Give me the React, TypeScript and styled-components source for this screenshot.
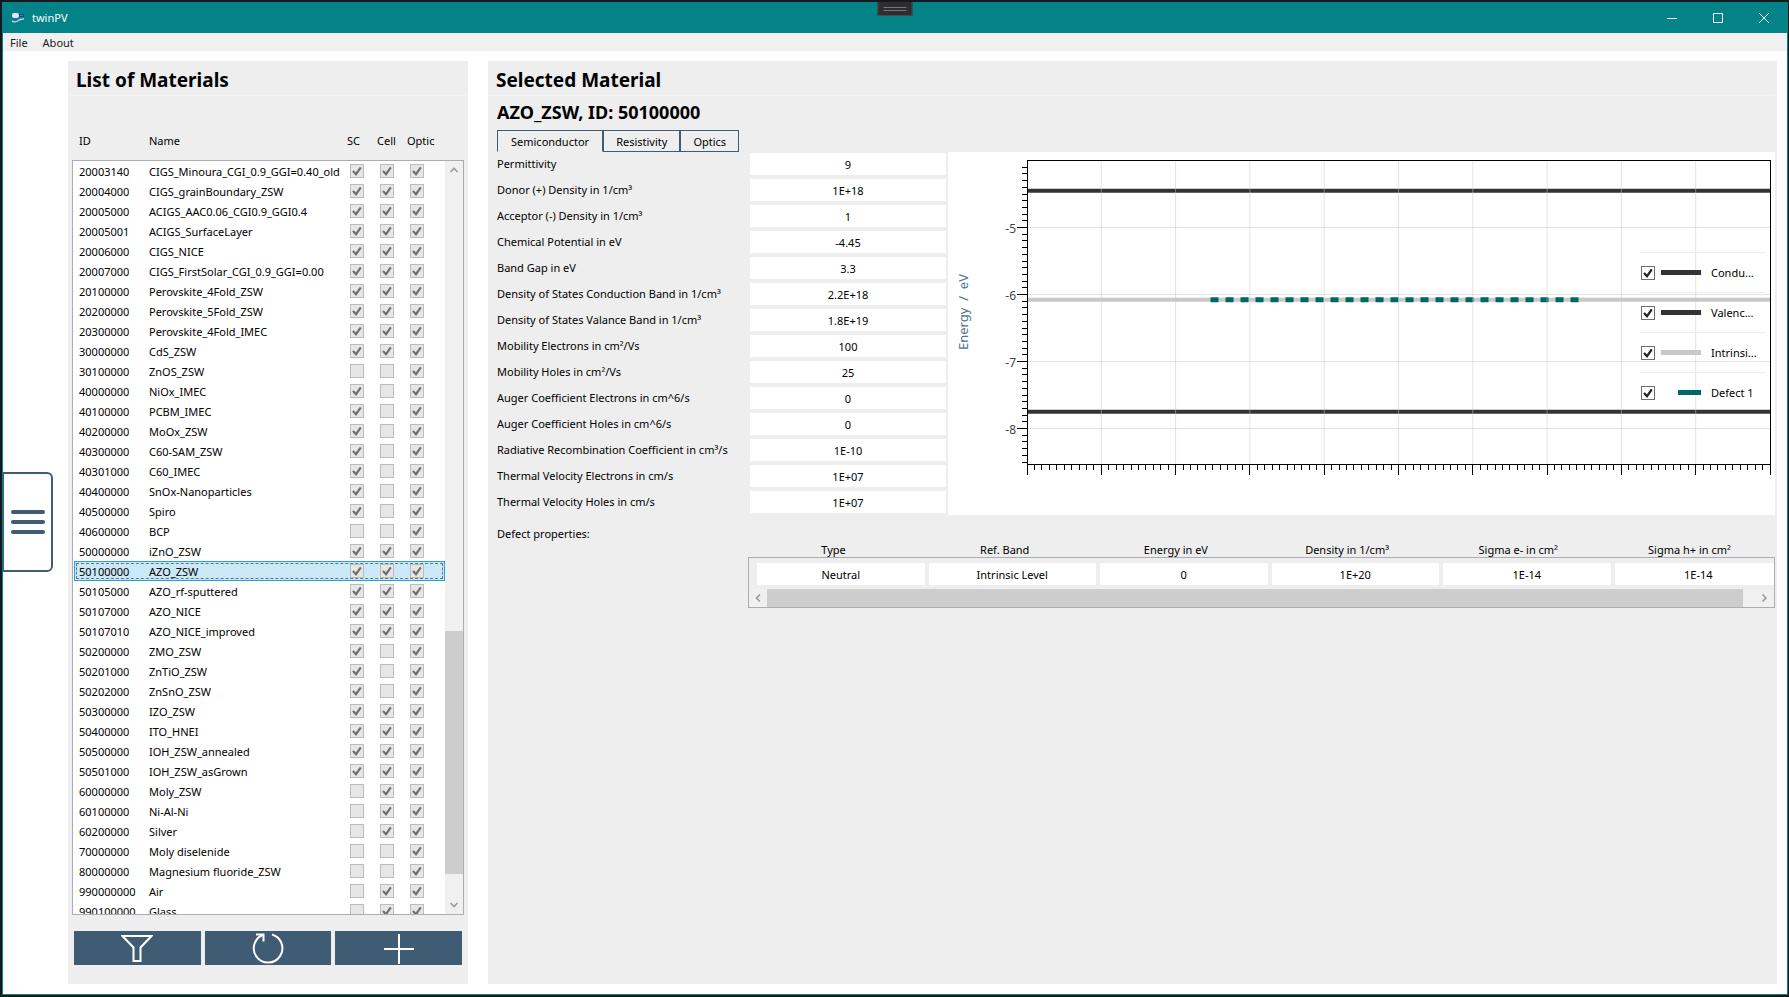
import React from "react";
import styled, { createGlobalStyle, css } from "styled-components";

const slate = "#3f5c74";
const panel = "#eeeeee";
const frame = "#abadb3";

const Global = createGlobalStyle`
  * { box-sizing: border-box; }
  body { margin: 0; background: #0d1214; }
  body, button, input {
    font-family: "Noto Sans", "Open Sans", sans-serif;
    font-size: 11px;
    line-height: 16px;
    color: #000;
  }
`;

const Desktop = styled.div`
  height: 100vh;
  min-width: 1200px;
  min-height: 640px;
  padding: 2px 1px 2px 2px;
  background: #14191c;
`;

const Window = styled.div`
  height: 100%;
  border: 1px solid #038387;
  background: #fff;
  display: flex;
  flex-direction: column;
`;

const TitleBar = styled.header`
  position: relative;
  height: 30px;
  flex: none;
  display: flex;
  align-items: center;
  padding-left: 8px;
  gap: 6px;
  background: #038387;
  color: #fff;
`;

const WindowButtons = styled.div`
  margin-left: auto;
  align-self: stretch;
  display: flex;
`;

const WindowButton = styled.button`
  width: 46px;
  padding: 0;
  border: 0;
  background: none;
  display: flex;
  align-items: center;
  justify-content: center;
`;

const DebugHandle = styled.div`
  position: absolute;
  top: -1px;
  left: 50%;
  transform: translateX(-50%);
  width: 35px;
  height: 14px;
  background: #2d2d30;
  border: 1px solid #4a4a4c;
  border-top: 0;
  display: flex;
  flex-direction: column;
  align-items: center;
  justify-content: center;
  gap: 2px;
`;

const HandleLine = styled.i`
  width: 23px;
  height: 1px;
  background: #77777a;
`;

const MenuBar = styled.nav`
  height: 18px;
  flex: none;
  display: flex;
  align-items: center;
  gap: 13px;
  padding: 1px 0 0 6px;
  background: #f0f0f0;
`;

const MenuItem = styled.button`
  border: 0;
  padding: 0 1px;
  background: none;
  color: #212121;
`;

const Body = styled.div`
  flex: 1;
  min-height: 0;
  display: grid;
  grid-template-columns: 65px 400px 1fr;
`;

const Drawer = styled.aside`
  display: flex;
  align-items: center;
  padding-bottom: 2px;
`;

const DrawerButton = styled.button`
  width: 50px;
  height: 100px;
  padding: 0;
  border: 2px solid ${slate};
  border-left-width: 1px;
  border-radius: 0 6px 6px 0;
  background: #fff;
  display: flex;
  flex-direction: column;
  align-items: center;
  justify-content: center;
  gap: 6px;
`;

const DrawerLine = styled.i`
  width: 34px;
  height: 4px;
  border-radius: 2px;
  background: ${slate};
`;

const Panel = styled.section`
  min-width: 0;
  min-height: 0;
  margin: 10px 0;
  background: ${panel};
  display: flex;
  flex-direction: column;
`;

const MainPanel = styled(Panel)`
  margin: 10px 10px 10px 20px;
  padding-right: 2px;
`;

const PanelTitle = styled.h1`
  flex: none;
  height: 35px;
  margin: 0;
  padding-left: 8px;
  border-bottom: 1px solid #f3f3f3;
  font-size: 19px;
  line-height: 38px;
`;

const MaterialName = styled.h2`
  flex: none;
  height: 34px;
  margin: 0;
  padding-left: 9px;
  font-size: 18px;
  line-height: 32px;
`;

/* Material list */

const ListArea = styled.div`
  position: relative;
  flex: 1;
  min-height: 0;
  margin: 0 4px;
  display: flex;
`;

const ListTable = styled.table`
  flex: 1;
  display: flex;
  flex-direction: column;
`;

const ListHead = styled.thead`
  display: block;
  height: 64px;
  padding: 37px 0 0 7px;
`;

const HeadRow = styled.tr`
  display: grid;
  grid-template-columns: 70px 198px 30px 30px 1fr;
`;

const HeadCell = styled.th`
  padding: 0;
  text-align: left;
  font-weight: 400;
`;

const ListBody = styled.tbody`
  display: block;
  flex: 1;
  min-height: 0;
  overflow: hidden;
  padding: 0 18px 0 1px;
  border: 1px solid ${frame};
  background: #fff;
`;

const ListRow = styled.tr<{ $selected: boolean }>`
  height: 20px;
  display: grid;
  grid-template-columns: 70px 201px 30px 30px 1fr;
  align-items: center;
  padding-left: 4px;
  border: 1px solid transparent;
  ${(p) =>
    p.$selected &&
    css`
      border-color: #26a0da;
      background: #cbe8f6;
      outline: 1px dashed #5f7885;
      outline-offset: -3px;
    `}
`;

const Cell = styled.td`
  display: flex;
  align-items: center;
  padding: 0;
  white-space: nowrap;
`;

const TextCell = styled(Cell)`
  padding-top: 2px;
`;

const tick = (color: string) =>
  `url("data:image/svg+xml,%3Csvg xmlns='http://www.w3.org/2000/svg' width='12' height='12'%3E%3Cpath d='M2 6l3 3.2L9.8 2.4' fill='none' stroke='%23${color}' stroke-width='2.2'/%3E%3C/svg%3E")`;

const CheckBox = styled.input`
  appearance: none;
  flex: none;
  width: 14px;
  height: 14px;
  margin: 0;
  border: 1px solid #707070;
  background: #fff;
  &:checked {
    background-image: ${tick("212121")};
  }
  &:disabled {
    border-color: #bcbcbc;
    background-color: #e6e6e6;
  }
  &:disabled:checked {
    background-image: ${tick("707070")};
  }
`;

const VScroll = styled.div`
  position: absolute;
  top: 65px;
  right: 1px;
  bottom: 1px;
  width: 18px;
  display: grid;
  grid-template-rows: 18px 1fr 18px;
  background: #f0f0f0;
`;

const ScrollArrow = styled.button`
  padding: 0;
  border: 0;
  background: none;
  display: flex;
  align-items: center;
  justify-content: center;
`;

const VTrack = styled.div`
  display: grid;
  grid-template-rows: 63fr 34fr 3fr;
`;

const VThumb = styled.div`
  grid-row: 2;
  background: #cdcdcd;
`;

const Actions = styled.div`
  flex: none;
  display: grid;
  grid-template-columns: repeat(3, 1fr);
  gap: 4px;
  padding: 16px 6px 19px;
`;

const ActionButton = styled.button`
  height: 34px;
  padding: 0;
  border: 0;
  background: #3f5c74;
  display: flex;
  align-items: center;
  justify-content: center;
`;

/* Selected material */

const Tabs = styled.div`
  flex: none;
  display: flex;
  height: 22px;
  padding-left: 9px;
`;

const Tab = styled.button<{ $active?: boolean }>`
  padding: 2px ${(p) => (p.$active ? 13 : 12)}px 0;
  border: 1px solid ${slate};
  border-bottom-color: ${(p) => (p.$active ? panel : slate)};
  background: ${panel};
`;

const Overview = styled.div`
  display: grid;
  grid-template-columns: 449px 1fr;
  gap: 2px;
  padding-left: 9px;
`;

const Properties = styled.form`
  display: flex;
  flex-direction: column;
  gap: 4px;
  padding: 1px 0 2px;
`;

const Property = styled.label`
  display: grid;
  grid-template-columns: 253px 196px;
  align-items: center;
`;

const ValueBox = styled.input`
  width: 100%;
  height: 22px;
  padding: 0;
  border: 0;
  background: #fff;
  text-align: center;
`;

const Chart = styled.figure`
  margin: 0;
  padding: 8px 5px 50px 0;
  background: #fff;
  display: grid;
  grid-template-columns: 79px 1fr;
`;

const AxisTitle = styled.figcaption`
  justify-self: start;
  width: 30px;
  writing-mode: vertical-rl;
  transform: rotate(180deg);
  text-align: center;
  white-space: pre;
  font-size: 13px;
  line-height: 30px;
  color: #4f748c;
`;

const Plot = styled.div`
  position: relative;
  min-width: 0;
`;

const PlotSvg = styled.svg`
  display: block;
  width: 100%;
  height: 305px;
  overflow: visible;
`;

const TickText = styled.text`
  font-size: 12px;
  fill: #444;
  text-anchor: end;
`;

const Legend = styled.div`
  position: absolute;
  top: 92px;
  right: 5px;
  width: 125px;
`;

const LegendItem = styled.label`
  height: 40px;
  display: grid;
  grid-template-columns: 14px 40px 1fr;
  column-gap: 6px;
  align-items: center;
  padding-left: 1px;
  border-top: 1px solid #ebebeb;
`;

const LegendLine = styled.i<{ $color: string; $short?: boolean }>`
  justify-self: end;
  width: ${(p) => (p.$short ? 23 : 40)}px;
  height: 5px;
  background: ${(p) => p.$color};
`;

const LegendText = styled.span`
  padding-left: 4px;
`;

const Defects = styled.section`
  padding-top: 11px;
`;

const DefectsTitle = styled.h3`
  margin: 0 0 0 9px;
  font-size: 11px;
  font-weight: 400;
`;

const DefectsArea = styled.div`
  margin-left: 260px;
`;

const DefectTable = styled.table`
  display: block;
`;

const DefectHead = styled.thead`
  display: block;
`;

const DefectHeadRow = styled.tr`
  height: 15px;
  display: grid;
  grid-template-columns: repeat(6, 1fr);
`;

const DefectHeadCell = styled.th`
  padding: 0;
  font-weight: 400;
`;

const DefectBody = styled.tbody`
  display: block;
  overflow: hidden;
  padding: 5px 0 4px;
  border: 1px solid ${frame};
  border-bottom: 0;
`;

const DefectRow = styled.tr`
  width: 100%;
  margin-left: 8px;
  display: grid;
  grid-template-columns: repeat(6, 1fr);
  gap: 4px;
`;

const DefectCell = styled.td`
  display: flex;
  padding: 0;
`;

const HScroll = styled.div`
  height: 19px;
  display: grid;
  grid-template-columns: 18px 1fr 31px;
  border: 1px solid ${frame};
  border-top: 0;
  background: #f0f0f0;
`;

const HThumb = styled.div`
  background: #cdcdcd;
`;

const EndArrow = styled(ScrollArrow)`
  justify-content: flex-end;
  padding-right: 5px;
`;

type Material = [string, string, string];

/* The third field holds the SC, Cell and Optic flags. */
const materials: Material[] = [
  ["20003140", "CIGS_Minoura_CGI_0.9_GGI=0.40_old", "111"],
  ["20004000", "CIGS_grainBoundary_ZSW", "111"],
  ["20005000", "ACIGS_AAC0.06_CGI0.9_GGI0.4", "111"],
  ["20005001", "ACIGS_SurfaceLayer", "111"],
  ["20006000", "CIGS_NICE", "111"],
  ["20007000", "CIGS_FirstSolar_CGI_0.9_GGI=0.00", "111"],
  ["20100000", "Perovskite_4Fold_ZSW", "111"],
  ["20200000", "Perovskite_5Fold_ZSW", "111"],
  ["20300000", "Perovskite_4Fold_IMEC", "111"],
  ["30000000", "CdS_ZSW", "111"],
  ["30100000", "ZnOS_ZSW", "001"],
  ["40000000", "NiOx_IMEC", "101"],
  ["40100000", "PCBM_IMEC", "101"],
  ["40200000", "MoOx_ZSW", "101"],
  ["40300000", "C60-SAM_ZSW", "101"],
  ["40301000", "C60_IMEC", "101"],
  ["40400000", "SnOx-Nanoparticles", "101"],
  ["40500000", "Spiro", "101"],
  ["40600000", "BCP", "001"],
  ["50000000", "iZnO_ZSW", "111"],
  ["50100000", "AZO_ZSW", "111"],
  ["50105000", "AZO_rf-sputtered", "111"],
  ["50107000", "AZO_NICE", "111"],
  ["50107010", "AZO_NICE_improved", "111"],
  ["50200000", "ZMO_ZSW", "101"],
  ["50201000", "ZnTiO_ZSW", "101"],
  ["50202000", "ZnSnO_ZSW", "101"],
  ["50300000", "IZO_ZSW", "111"],
  ["50400000", "ITO_HNEI", "111"],
  ["50500000", "IOH_ZSW_annealed", "111"],
  ["50501000", "IOH_ZSW_asGrown", "111"],
  ["60000000", "Moly_ZSW", "011"],
  ["60100000", "Ni-Al-Ni", "011"],
  ["60200000", "Silver", "011"],
  ["70000000", "Moly diselenide", "001"],
  ["80000000", "Magnesium fluoride_ZSW", "001"],
  ["990000000", "Air", "011"],
  ["990100000", "Glass", "011"],
];

const properties = [
  ["Permittivity", "9"],
  ["Donor (+) Density in 1/cm³", "1E+18"],
  ["Acceptor (-) Density in 1/cm³", "1"],
  ["Chemical Potential in eV", "-4.45"],
  ["Band Gap in eV", "3.3"],
  ["Density of States Conduction Band in 1/cm³", "2.2E+18"],
  ["Density of States Valance Band in 1/cm³", "1.8E+19"],
  ["Mobility Electrons in cm²/Vs", "100"],
  ["Mobility Holes in cm²/Vs", "25"],
  ["Auger Coefficient Electrons in cm^6/s", "0"],
  ["Auger Coefficient Holes in cm^6/s", "0"],
  ["Radiative Recombination Coefficient in cm³/s", "1E-10"],
  ["Thermal Velocity Electrons in cm/s", "1E+07"],
  ["Thermal Velocity Holes in cm/s", "1E+07"],
];

const defect = [
  ["Type", "Neutral"],
  ["Ref. Band", "Intrinsic Level"],
  ["Energy in eV", "0"],
  ["Density in 1/cm³", "1E+20"],
  ["Sigma e- in cm²", "1E-14"],
  ["Sigma h+ in cm²", "1E-14"],
];

const flags = ["SC", "Cell", "Optic"];

function AppIcon() {
  return (
    <svg width="15" height="12" viewBox="0 0 15 12" aria-hidden="true">
      <rect x="7" y="2" width="6" height="3" fill="#1646a0" />
      <path d="M9 3.5h3" stroke="#3f7fd0" />
      <rect x="1" y="1" width="7" height="5" rx="2" fill="#e6e4fa" />
      <path d="M1 7q3 1 8 0l-3 2q-3 0-5-2z" fill="#2450b0" />
      <path d="M1 9q4 2 7-1 2-1 5-1" fill="none" stroke="#b9cbe6" strokeWidth="1.4" />
    </svg>
  );
}

function Chevron({ d }: { d: string }) {
  return (
    <svg width="10" height="10" viewBox="0 0 10 10" aria-hidden="true">
      <path d={d} fill="none" stroke="#9a9a9a" strokeWidth="1.6" />
    </svg>
  );
}

function MaterialList() {
  return (
    <Panel>
      <PanelTitle>List of Materials</PanelTitle>
      <ListArea>
        <ListTable>
          <ListHead>
            <HeadRow>
              {["ID", "Name", ...flags].map((h) => (
                <HeadCell key={h}>{h}</HeadCell>
              ))}
            </HeadRow>
          </ListHead>
          <ListBody>
            {materials.map(([id, name, set]) => (
              <ListRow key={id} $selected={id === "50100000"}>
                <TextCell>{id}</TextCell>
                <TextCell>{name}</TextCell>
                {flags.map((flag, i) => (
                  <Cell key={flag}>
                    <CheckBox
                      type="checkbox"
                      disabled
                      defaultChecked={set[i] === "1"}
                      aria-label={`${name} ${flag}`}
                    />
                  </Cell>
                ))}
              </ListRow>
            ))}
          </ListBody>
        </ListTable>
        <VScroll>
          <ScrollArrow aria-label="Scroll up">
            <Chevron d="M1.500 7L5 3.500 8.500 7" />
          </ScrollArrow>
          <VTrack>
            <VThumb />
          </VTrack>
          <ScrollArrow aria-label="Scroll down">
            <Chevron d="M1.500 3L5 6.500 8.500 3" />
          </ScrollArrow>
        </VScroll>
      </ListArea>
      <Actions>
        <ActionButton aria-label="Filter">
          <svg width="32" height="32" fill="none" stroke="#fff" strokeWidth="2">
            <path d="M1.500 4h29L19.500 15.500V29h-7V15.500L1.500 4z" />
          </svg>
        </ActionButton>
        <ActionButton aria-label="Reload">
          <svg width="32" height="32" fill="none" stroke="#fff" strokeWidth="2">
            <path d="M20 2.500A14.300 14.300 0 1 1 11.500 2.700" />
            <path d="M4 2.500h7.500v7" />
          </svg>
        </ActionButton>
        <ActionButton aria-label="Add">
          <svg width="32" height="32" fill="none" stroke="#fff" strokeWidth="2">
            <path d="M1 17h30M16 2v30" />
          </svg>
        </ActionButton>
      </Actions>
    </Panel>
  );
}

const yOf = (energy: number) => 0.5 + (-4 - energy) * 67;
const pct = (n: number) => `${n}%`;
const range = (n: number) => Array.from({ length: n }, (_, i) => i);

function BandChart() {
  return (
    <Chart>
      <AxisTitle>{"Energy  /  eV"}</AxisTitle>
      <Plot>
        <PlotSvg role="img" aria-label="Band energies">
          <g strokeWidth="4">
            <line x1="0" x2="100%" y1={yOf(-4.45)} y2={yOf(-4.45)} stroke="#333" />
            <line x1="0" x2="100%" y1={yOf(-7.75)} y2={yOf(-7.75)} stroke="#333" />
            <line x1="0" x2="100%" y1={yOf(-6.08)} y2={yOf(-6.08)} stroke="#c8c8c8" />
            <line
              x1="24.7%"
              x2="74.3%"
              y1={yOf(-6.08)}
              y2={yOf(-6.08)}
              stroke="#006666"
              strokeWidth="5"
              strokeDasharray="8 7"
            />
          </g>
          <g stroke="#c8c8c8" strokeOpacity="0.5">
            {range(9).map((i) => (
              <line key={i} x1={pct(10 * (i + 1))} x2={pct(10 * (i + 1))} y1="1" y2="304" />
            ))}
            {[-5, -6, -7, -8].map((e) => (
              <line key={e} x1="0" x2="100%" y1={yOf(e)} y2={yOf(e)} />
            ))}
          </g>
          <g stroke="#000" shapeRendering="crispEdges">
            {range(45).map((i) => {
              const y = yOf(-4 - (i + 1) / 10);
              return <line key={i} x1={(i + 1) % 10 ? -5 : -10} x2="0" y1={y} y2={y} />;
            })}
            {range(101).map((i) => (
              <line key={i} x1={pct(i)} x2={pct(i)} y1="305" y2={i % 10 ? 310 : 315} />
            ))}
            <rect x="0" y="0" width="100%" height="304" fill="none" />
          </g>
          {[-5, -6, -7, -8].map((e) => (
            <TickText key={e} x="-11" y={yOf(e) + 5}>
              {e}
            </TickText>
          ))}
        </PlotSvg>
        <Legend>
          <LegendItem>
            <CheckBox type="checkbox" defaultChecked />
            <LegendLine $color="#333" />
            <LegendText>Condu...</LegendText>
          </LegendItem>
          <LegendItem>
            <CheckBox type="checkbox" defaultChecked />
            <LegendLine $color="#333" />
            <LegendText>Valenc...</LegendText>
          </LegendItem>
          <LegendItem>
            <CheckBox type="checkbox" defaultChecked />
            <LegendLine $color="#c8c8c8" />
            <LegendText>Intrinsi...</LegendText>
          </LegendItem>
          <LegendItem>
            <CheckBox type="checkbox" defaultChecked />
            <LegendLine $color="#006666" $short />
            <LegendText>Defect 1</LegendText>
          </LegendItem>
        </Legend>
      </Plot>
    </Chart>
  );
}

function SelectedMaterial() {
  return (
    <MainPanel>
      <PanelTitle>Selected Material</PanelTitle>
      <MaterialName>AZO_ZSW, ID: 50100000</MaterialName>
      <Tabs role="tablist">
        <Tab role="tab" aria-selected="true" $active>
          Semiconductor
        </Tab>
        <Tab role="tab">Resistivity</Tab>
        <Tab role="tab">Optics</Tab>
      </Tabs>
      <Overview>
        <Properties>
          {properties.map(([label, value]) => (
            <Property key={label}>
              {label}
              <ValueBox defaultValue={value} />
            </Property>
          ))}
        </Properties>
        <BandChart />
      </Overview>
      <Defects>
        <DefectsTitle>Defect properties:</DefectsTitle>
        <DefectsArea>
          <DefectTable>
            <DefectHead>
              <DefectHeadRow>
                {defect.map(([label]) => (
                  <DefectHeadCell key={label}>{label}</DefectHeadCell>
                ))}
              </DefectHeadRow>
            </DefectHead>
            <DefectBody>
              <DefectRow>
                {defect.map(([label, value]) => (
                  <DefectCell key={label}>
                    <ValueBox defaultValue={value} aria-label={label} />
                  </DefectCell>
                ))}
              </DefectRow>
            </DefectBody>
          </DefectTable>
          <HScroll>
            <ScrollArrow aria-label="Scroll left">
              <Chevron d="M7 1.500L3.500 5 7 8.500" />
            </ScrollArrow>
            <HThumb />
            <EndArrow aria-label="Scroll right">
              <Chevron d="M3.500 1.500L7 5 3.500 8.500" />
            </EndArrow>
          </HScroll>
        </DefectsArea>
      </Defects>
    </MainPanel>
  );
}

export default function App() {
  return (
    <Desktop>
      <Global />
      <Window>
        <TitleBar>
          <AppIcon />
          twinPV
          <DebugHandle>
            <HandleLine />
            <HandleLine />
          </DebugHandle>
          <WindowButtons>
            <WindowButton aria-label="Minimize">
              <svg width="10" height="10" stroke="#fff">
                <path d="M0 5.500h10" />
              </svg>
            </WindowButton>
            <WindowButton aria-label="Maximize">
              <svg width="10" height="10" stroke="#fff" fill="none">
                <path d="M.5.500h9v9h-9z" />
              </svg>
            </WindowButton>
            <WindowButton aria-label="Close">
              <svg width="10" height="10" stroke="#fff">
                <path d="M0 0l10 10M10 0L0 10" />
              </svg>
            </WindowButton>
          </WindowButtons>
        </TitleBar>
        <MenuBar>
          <MenuItem>File</MenuItem>
          <MenuItem>About</MenuItem>
        </MenuBar>
        <Body>
          <Drawer>
            <DrawerButton aria-label="Open menu">
              <DrawerLine />
              <DrawerLine />
              <DrawerLine />
            </DrawerButton>
          </Drawer>
          <MaterialList />
          <SelectedMaterial />
        </Body>
      </Window>
    </Desktop>
  );
}
